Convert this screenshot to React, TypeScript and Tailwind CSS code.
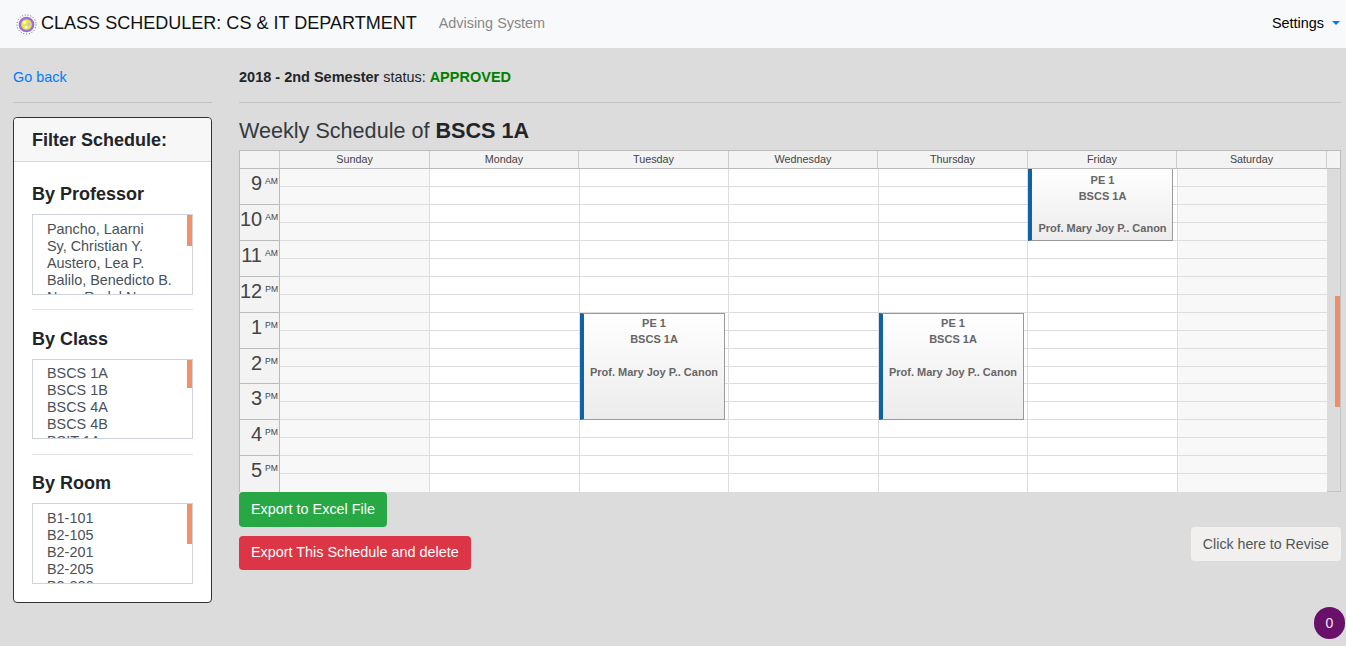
const days = [
  { name: "Sunday", head: "w-[150px]" },
  { name: "Monday", head: "w-[149px]" },
  { name: "Tuesday", head: "w-[150px]" },
  { name: "Wednesday", head: "w-[149px]" },
  { name: "Thursday", head: "w-[150px]" },
  { name: "Friday", head: "w-[149px]" },
  { name: "Saturday", head: "w-[150px]" },
];

const cols = [
  "w-[150px] bg-[#f8f8f8] border-r",
  "w-[150px] bg-white border-r",
  "w-[149px] bg-white border-r",
  "w-[150px] bg-white border-r",
  "w-[149px] bg-white border-r",
  "w-[150px] bg-white border-r",
  "w-[149px] bg-[#f8f8f8]",
];

const hours = [
  { n: "9", m: "AM", h: "h-[36px]" },
  { n: "10", m: "AM", h: "h-[36px]" },
  { n: "11", m: "AM", h: "h-[36px]" },
  { n: "12", m: "PM", h: "h-[36px]" },
  { n: "1", m: "PM", h: "h-[36px]" },
  { n: "2", m: "PM", h: "h-[35px]" },
  { n: "3", m: "PM", h: "h-[36px]" },
  { n: "4", m: "PM", h: "h-[36px]" },
  { n: "5", m: "PM", h: "h-[37px]" },
];

function Logo() {
  return (
    <svg width="21" height="21" viewBox="0 0 22 22" className="mr-[4px] shrink-0">
      <circle cx="11" cy="11" r="10" fill="none" stroke="#555" strokeWidth="1" strokeDasharray="1 2" />
      <circle cx="11" cy="11" r="8.2" fill="#9a6fd8" />
      <circle cx="11" cy="11" r="5.6" fill="#e6e84a" />
      <circle cx="9" cy="9" r="1.6" fill="#f4f4f4" />
      <circle cx="13.5" cy="10.5" r="1.6" fill="#c9b8e8" />
      <circle cx="10.5" cy="14" r="1.4" fill="#f4f4f4" />
    </svg>
  );
}

function ListBox({ items, box, thumb }: { items: string[]; box: string; thumb: string }) {
  return (
    <div className={`relative mt-2 overflow-hidden border border-[#ced4da] bg-white pl-[14px] text-[14.4px] leading-[17px] text-[#495057] ${box}`}>
      {items.map((item) => (
        <div key={item} className="whitespace-nowrap">{item}</div>
      ))}
      <div className={`absolute right-0 top-0 w-[5px] bg-[#f0916c] ${thumb}`} />
    </div>
  );
}

function EventBlock({ pos }: { pos: string }) {
  return (
    <div className={`absolute w-[145px] border border-l-4 border-[#999] border-l-[#0f62a8] bg-gradient-to-b from-white to-[#ececec] text-center text-[11px] font-bold text-[#666] ${pos}`}>
      <div>PE 1</div>
      <div>BSCS 1A</div>
      <div>&nbsp;</div>
      <div className="whitespace-nowrap">Prof. Mary Joy P.. Canon</div>
    </div>
  );
}

export default function App() {
  return (
    <div className="relative h-[646px] overflow-hidden bg-[#dcdcdc] font-['Liberation_Sans',sans-serif] text-[#212529]">
      {/* NAVBAR */}
      <nav className="flex h-[48px] items-center justify-between bg-[#f8f9fa] pl-[16px] pr-[6px]">
        <div className="flex items-center">
          <Logo />
          <span className="text-[18.05px] text-[#111]">CLASS SCHEDULER: CS &amp; IT DEPARTMENT</span>
          <span className="ml-[22px] text-[14.4px] text-[#888]">Advising System</span>
        </div>
        <div className="flex items-center text-[14.4px] text-black">
          Settings
          <span className="ml-2 mt-[-2px] h-0 w-0 border-x-4 border-t-4 border-x-transparent border-t-[#007bff]" />
        </div>
      </nav>

      <div className="flex pl-[13px]">
        {/* SIDEBAR */}
        <aside className="w-[199px] shrink-0 pt-[18px]">
          <a className="block text-[14.4px] leading-[22px] text-[#007bff]">Go back</a>
          <hr className="mt-[14px] border-[#c4c4c4]" />
          <div className="mt-[14px] h-[486px] rounded border border-[#333] bg-white">
            <div className="flex h-[44px] items-center rounded-t border-b border-[#d8d8d8] bg-[#f7f7f7] pl-[18px] pt-[1px] text-[18px] font-bold">
              Filter Schedule:
            </div>
            <div className="px-[18px] pt-[20px]">
              <h5 className="text-[18px] font-bold leading-[24px]">By Professor</h5>
              <ListBox
                box="h-[81px] pt-[6px]"
                thumb="h-[31px]"
                items={["Pancho, Laarni", "Sy, Christian Y.", "Austero, Lea P.", "Balilo, Benedicto B.", "Nery, Rodel N."]}
              />
              <hr className="mt-[14px] border-[#e4e4e4]" />
              <h5 className="mt-[17px] text-[18px] font-bold leading-[24px]">By Class</h5>
              <ListBox
                box="h-[80px] pt-[5px]"
                thumb="h-[28px]"
                items={["BSCS 1A", "BSCS 1B", "BSCS 4A", "BSCS 4B", "BSIT 1A"]}
              />
              <hr className="mt-[15px] border-[#e4e4e4]" />
              <h5 className="mt-[16px] text-[18px] font-bold leading-[24px]">By Room</h5>
              <ListBox
                box="h-[81px] pt-[6px]"
                thumb="h-[40px]"
                items={["B1-101", "B2-105", "B2-201", "B2-205", "B2-206"]}
              />
            </div>
          </div>
        </aside>

        {/* MAIN */}
        <main className="ml-[27px] w-[1102px] pt-[18px]">
          <p className="text-[14.4px] leading-[22px]">
            <b className="text-[14.5px]">2018 - 2nd Semester</b> status: <b className="text-[14.5px] text-[#008000]">APPROVED</b>
          </p>
          <hr className="mt-[14px] border-[#c4c4c4]" />
          <h4 className="mt-[15px] text-[21.6px] leading-[26px] text-[#343a40]">
            Weekly Schedule of <b className="text-[#212529]">BSCS 1A</b>
          </h4>

          {/* CALENDAR */}
          <div className="mt-[6px] w-[1102px]">
            <div className="flex h-[19px] border border-[#bbb] bg-[#f3f3f3] text-[10.8px] leading-[17px] text-[#444]">
              <div className="w-[40px] shrink-0 border-r border-[#ccc]" />
              {days.map((d) => (
                <div key={d.name} className={`${d.head} shrink-0 border-r border-[#ccc] text-center`}>
                  {d.name}
                </div>
              ))}
            </div>
            <div className="relative flex h-[323px] overflow-hidden border-l border-[#bbb]">
              <div className="w-[1087px] shrink-0">
                {hours.map((hour) => (
                  <div key={hour.n} className={`flex ${hour.h}`}>
                    <div className="flex w-[40px] shrink-0 justify-end border-b border-r border-[#bbb] bg-[#f3f3f3] text-[#444]">
                      <span className="mt-[3px] text-[20px] leading-[23px]">{hour.n}</span>
                      <span className="ml-[3px] mt-[7px] w-[14px] text-[8.6px] leading-[10px]">{hour.m}</span>
                    </div>
                    {cols.map((c) => (
                      <div key={c} className={`flex shrink-0 flex-col border-[#ddd] ${c}`}>
                        <div className="h-[18px] shrink-0 border-b border-[#ddd]" />
                        <div className="flex-1 border-b border-[#ddd]" />
                      </div>
                    ))}
                  </div>
                ))}
              </div>
              <div className="relative w-[14px] border-r border-b border-[#c4c4c4] bg-[#dcdcdc]">
                <div className="absolute right-0 top-[127px] h-[111px] w-[5px] bg-[#ee8e69]" />
              </div>
              <EventBlock pos="left-[340px] top-[144px] h-[107px] pt-[1px] leading-[16.4px]" />
              <EventBlock pos="left-[639px] top-[144px] h-[107px] pt-[1px] leading-[16.4px]" />
              <EventBlock pos="left-[788px] top-0 h-[72px] border-t-0 pl-[1px] pt-[3px] leading-[16px]" />
            </div>
          </div>

          {/* ACTIONS */}
          <div className="flex items-end justify-between">
            <div className="flex flex-col items-start">
              <button className="h-[35px] rounded bg-[#28a745] px-3 text-[14.4px] text-white">Export to Excel File</button>
              <button className="mt-[9px] h-[34px] rounded bg-[#dc3545] px-3 text-[14.4px] text-white">Export This Schedule and delete</button>
            </div>
            <button className="mb-[9px] h-[34px] rounded bg-[#f1f0ef] px-3 pt-[1px] text-[14.2px] text-[#555]">Click here to Revise</button>
          </div>
        </main>
      </div>

      <div className="absolute left-[1314px] top-[607px] flex h-[32px] w-[31px] items-center justify-center rounded-full bg-[#68106a] text-[14px] text-[#f2e6f2]">
        0
      </div>
    </div>
  );
}
